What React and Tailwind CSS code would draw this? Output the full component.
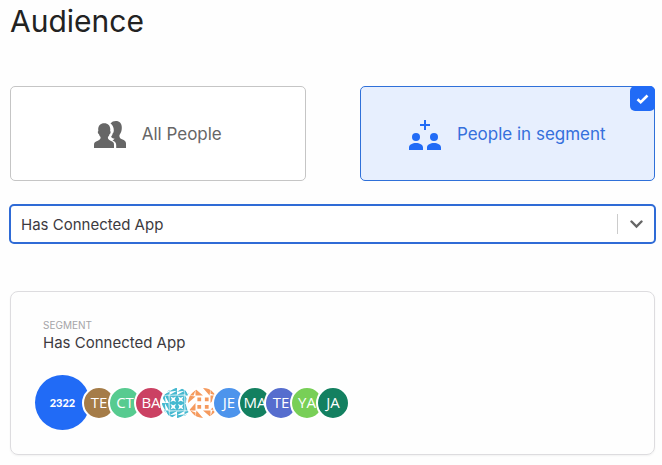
import { useState } from "react";

const avatars = [
  { text: "TE", color: "bg-[#a57c48]" },
  { text: "CT", color: "bg-[#57cb90]" },
  { text: "BA", color: "bg-[#cb4163]" },
  { pattern: "teal" },
  { pattern: "orange" },
  { text: "JE", color: "bg-[#4d94ec]" },
  { text: "MA", color: "bg-[#138060]" },
  { text: "TE", color: "bg-[#566dce]" },
  { text: "YA", color: "bg-[#78cf57]" },
  { text: "JA", color: "bg-[#138060]" },
];

function PeopleIcon() {
  return (
    <svg width="32" height="28" viewBox="0 0 32 28" fill="currentColor" aria-hidden="true">
      <path d="M16.500 2.600C17.800.8 19.600 0 21.800 0c3.900 0 6 2.600 6 6.300 0 2.500-.3 4.300-1.300 5.900-.7 1.100-1.100 1.700-1.100 2.900 0 1.700.9 2.500 2.600 3.200 2.700 1.100 4 1.900 4 4.300V27h-9.800v-2.900c0-2.300-1.300-3.600-3.700-4.600 1.200-.4 1.900-1.100 1.900-1.900-1.700-.2-2.700-.8-3.300-1.900 1-1 1.400-2 1.500-3.100.8-.8 1.200-1.900 1.200-3.400 0-2.700-1-5-3.300-6.600z" />
      <path d="M10.200 2.200c3.900 0 6.100 2.500 6.100 6.100 0 .8-.1 1.200-.2 1.700.9.200.8 2.400-.6 3.200-.4 1.500-.9 2.100-1.600 2.900 0 2.300.7 2.800 2.700 3.600 2.500 1 3.400 1.600 3.400 4V27H0v-3.300c0-2.400 1.200-3 3.800-4 2-.8 2.800-1.300 2.800-3.600-.7-.8-1.200-1.400-1.600-2.900-1.400-.8-1.600-3-.6-3.200-.2-.6-.2-1-.2-1.700 0-3.600 2.200-6.100 6-6.100z" />
    </svg>
  );
}

function SegmentIcon() {
  return (
    <svg width="32" height="30" viewBox="0 0 32 30" fill="currentColor" aria-hidden="true">
      <path d="M15 0h2v4h4v2h-4v4h-2V6h-4V4h4z" />
      <circle cx="7" cy="17" r="4" />
      <circle cx="25" cy="17" r="4" />
      <path d="M0 30v-2.500C0 24.500 3.500 23 7 23s7 1.500 7 4.500V30zM18 30v-2.500c0-3 3.500-4.500 7-4.500s7 1.500 7 4.500V30z" />
    </svg>
  );
}

function Identicon({ pattern }) {
  const turns = [0, 90, 180, 270];

  if (pattern === "teal") {
    return (
      <svg viewBox="0 0 32 32" className="size-full" fill="#46b9d0" aria-hidden="true">
        {turns.map((turn) => (
          <g key={turn} transform={`rotate(${turn} 16 16)`}>
            <path
              d="M8 8h8v8H8zM9 9l1.500 3L9 15l3-1.500L15 15l-1.500-3L15 9l-3 1.500z"
              fillRule="evenodd"
            />
            <path d="M7 4l9-5v4zM8 7.500L16 3v4zM16 4l8-5v4zM16 7.500L24 3v4z" />
            <path d="M0 8l8-4v3zM2 5l6-5v3z" />
          </g>
        ))}
      </svg>
    );
  }

  return (
    <svg viewBox="0 0 32 32" className="size-full" fill="#f59a5e" aria-hidden="true">
      {turns.map((turn) => (
        <g key={turn} transform={`rotate(${turn} 16 16)`}>
          <path d="M10 10h4v4h-4z" />
          <path d="M8 1l8 7H8zM16 0h8l-1 8z" />
          <path d="M1 8l7-6-2 6z" />
        </g>
      ))}
    </svg>
  );
}

function Option({ label, icon, value, selected, onSelect }) {
  return (
    <label
      className={
        "relative flex flex-1 h-[95px] items-center justify-center gap-4 rounded-[5px] border pt-[3px] text-[17px] cursor-pointer " +
        (selected
          ? "border-[#2f70d9] bg-[#e7effe] text-[#3570dc]"
          : "border-[#c5c5c5] bg-white text-[#666666]")
      }
    >
      <input
        type="radio"
        name="audience"
        value={value}
        checked={selected}
        onChange={() => onSelect(value)}
        className="sr-only"
      />
      {icon}
      <span>{label}</span>
      {selected && (
        <span className="absolute -top-px -right-px flex size-[25px] items-center justify-center rounded-[5px] bg-[#216bf6] text-white">
          <svg width="13" height="10" viewBox="0 0 13 10" fill="none" aria-hidden="true">
            <path d="M1.500 5.200l3.200 3L11.500 1.500" stroke="currentColor" strokeWidth="2.600" />
          </svg>
        </span>
      )}
    </label>
  );
}

function App() {
  const [audience, setAudience] = useState("segment");

  return (
    <main className="min-h-screen bg-[#fefefe] pr-[7px] pl-2 pb-2 font-['Inter',sans-serif] text-[#3c3a40]">
      <h1 className="px-0.5 pt-[3px] text-3xl leading-9 text-[#222222]">Audience</h1>

      <div className="mt-[47px] flex gap-[54px] pl-0.5">
        <Option
          label="All People"
          value="all"
          icon={<PeopleIcon />}
          selected={audience === "all"}
          onSelect={setAudience}
        />
        <Option
          label="People in segment"
          value="segment"
          icon={<span className="text-[#216bf6]"><SegmentIcon /></span>}
          selected={audience === "segment"}
          onSelect={setAudience}
        />
      </div>

      <div className="mt-[23px] ml-px -mr-px grid h-10 items-center rounded-[5px] border-2 border-[#2f6bd6] bg-white">
        <select
          aria-label="Segment"
          className="col-start-1 row-start-1 h-full w-full appearance-none bg-transparent pt-[3px] pl-2.5 pr-12 text-[15px] outline-none"
        >
          <option>Has Connected App</option>
        </select>
        <span className="pointer-events-none col-start-1 row-start-1 flex h-5 w-[37px] items-center justify-center justify-self-end border-l border-[#cccccc] text-[#666666]">
          <svg width="13" height="9" viewBox="0 0 13 9" fill="none" aria-hidden="true">
            <path d="M1.500 1.500l5 5 5-5" stroke="currentColor" strokeWidth="2.400" strokeLinecap="round" />
          </svg>
        </span>
      </div>

      <section className="mt-[47px] ml-0.5 rounded-lg border border-[#dddcdf] px-6 pt-[27px] pb-6 shadow-xs">
        <div className="pl-2">
          <p className="text-[10px] leading-3 text-[#a5a4a8]">SEGMENT</p>
          <h2 className="text-[15px] leading-6">Has Connected App</h2>
        </div>

        <div className="mt-5 flex items-center">
          <div className="flex size-[55px] items-center justify-center rounded-full bg-[#216bf6] pt-0.5 font-['Lato',sans-serif] text-[11px] font-black text-white">
            2322
          </div>
          {avatars.map((avatar, i) => (
            <div
              key={i}
              className={
                "-ml-2 flex size-[34px] items-center justify-center overflow-hidden rounded-full border-2 border-white font-['Open_Sans',sans-serif] text-[15px] text-white " +
                (avatar.color || "bg-white")
              }
            >
              {avatar.pattern ? <Identicon pattern={avatar.pattern} /> : avatar.text}
            </div>
          ))}
        </div>
      </section>
    </main>
  );
}

export default App;
